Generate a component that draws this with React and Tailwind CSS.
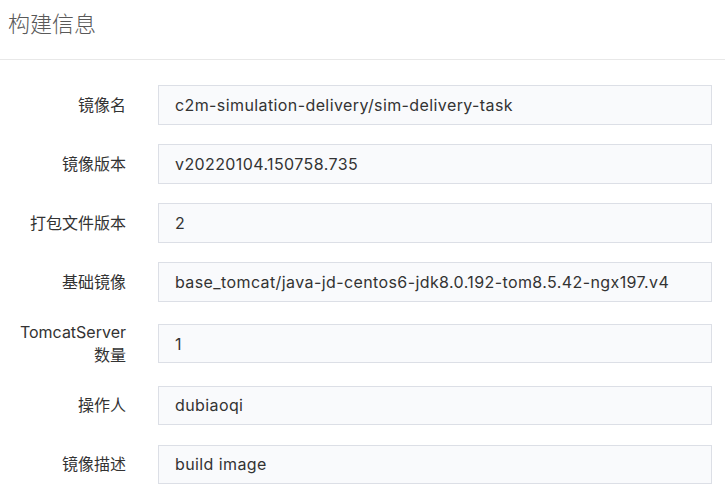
import React from 'react';

const rows = [
  { label: '镜像名', value: 'c2m-simulation-delivery/sim-delivery-task' },
  { label: '镜像版本', value: 'v20220104.150758.735' },
  { label: '打包文件版本', value: '2' },
  { label: '基础镜像', value: 'base_tomcat/java-jd-centos6-jdk8.0.192-tom8.5.42-ngx197.v4' },
  { label: ['TomcatServer', '数量'], value: '1' },
  { label: '操作人', value: 'dubiaoqi' },
  { label: '镜像描述', value: 'build image' },
];

const font = { fontFamily: 'Inter, "Noto Sans CJK SC", sans-serif' };

const App = () => {
  return (
    <div className="w-[725px] h-[503px] bg-white overflow-hidden" style={font}>
      {/* Header */}
      <div className="h-[60px] border-b border-[#e8e8e8] px-[8px] pt-[10px]">
        <h2 className="text-[22px] leading-[28px] font-light text-[#595959]">构建信息</h2>
      </div>

      {/* Form */}
      <div className="pt-[25px] flex flex-col gap-[19.5px]">
        {rows.map((row, i) => (
          <div key={i} className="flex items-center">
            <div className="w-[126px] shrink-0 text-right text-[16px] leading-[22.5px] text-[#333]">
              {Array.isArray(row.label)
                ? row.label.map((l) => <div key={l}>{l}</div>)
                : row.label}
            </div>
            <div className="ml-[32px] w-[554px] h-[39.5px] shrink-0 border border-[#dcdfe6] bg-[#f9fafc] pl-[16px] flex items-center text-[16px] tracking-[0.4px] text-[#333] whitespace-nowrap">
              {row.value}
            </div>
          </div>
        ))}
      </div>
    </div>
  );
};

export default App;
